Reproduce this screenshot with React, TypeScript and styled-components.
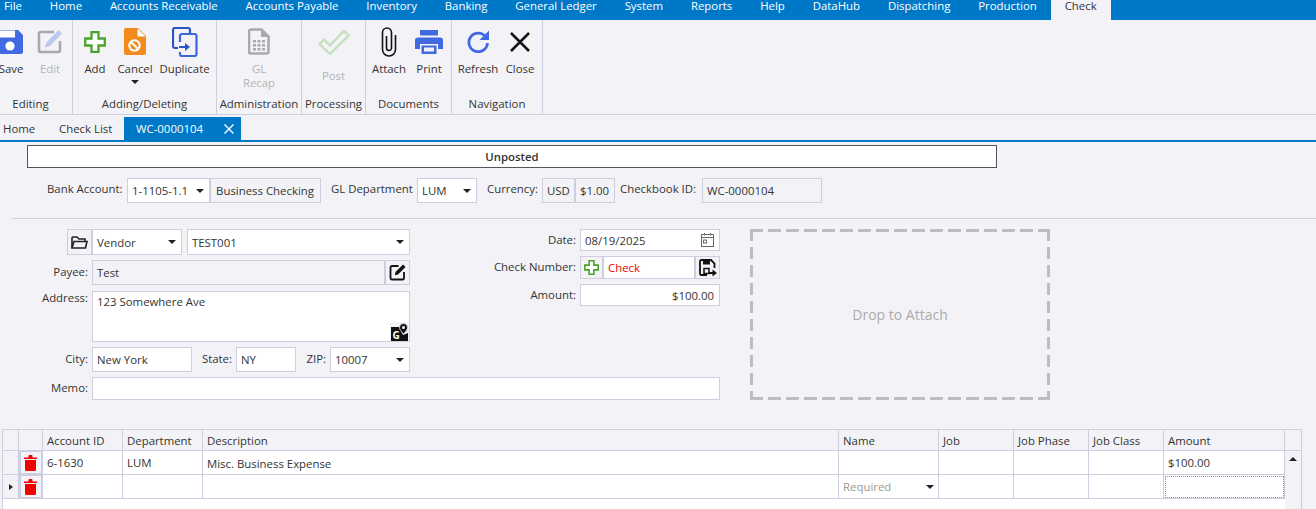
import React from "react";
import styled, { createGlobalStyle } from "styled-components";

const GlobalStyle = createGlobalStyle`
  html, body { margin: 0; padding: 0; background: #f3f3f7; }
  body { font-family: "Open Sans", "Noto Sans", "Liberation Sans", sans-serif; font-size: 11.4px; color: #333; }
  * { box-sizing: border-box; }
`;

const BORDER = "#cdcee0";
const PANEL = "#f3f3f7";
const BLUE = "#0078c8";
const ICON_BLUE = "#4169e1";
const DASH = "#bdbdbd";

const Page = styled.div`
  width: 1316px; height: 509px; overflow: hidden; background: ${PANEL};
  display: flex; flex-direction: column;
`;
const MenuBar = styled.div`
  height: 20px; flex: none; background: ${BLUE}; display: flex; margin-left: -10px;
`;
const MenuItem = styled.div<{ $active?: boolean }>`
  padding: 0 13.95px; line-height: 12px; height: 20px; white-space: nowrap;
  color: ${p => (p.$active ? "#333" : "#fff")};
  background: ${p => (p.$active ? PANEL : "transparent")};
`;
const Ribbon = styled.div`
  height: 95px; flex: none; display: flex; margin-left: -11px; border-bottom: 1px solid ${BORDER};
`;
const Group = styled.div<{ $w: number }>`
  width: ${p => p.$w}px; flex: none; display: flex; flex-direction: column; border-right: 1px solid ${BORDER};
`;
const GroupButtons = styled.div`
  height: 74px; display: flex;
`;
const GroupLabel = styled.div`
  height: 20px; text-align: center; line-height: 19px; white-space: nowrap;
`;
const RibbonButton = styled.div<{ $w: number; $disabled?: boolean }>`
  width: ${p => p.$w}px; flex: none; display: flex; flex-direction: column; align-items: center;
  color: ${p => (p.$disabled ? "#b4b4b8" : "#333")};
`;
const IconSlot = styled.div`
  height: 42px; width: 100%; flex: none; display: flex; align-items: center; justify-content: center; padding-top: 2px; padding-bottom: 1px;
`;
const ButtonLabel = styled.div<{ $drop?: number }>`
  text-align: center; line-height: 14px; white-space: nowrap; margin-top: ${p => p.$drop ?? 0}px;
`;
const DropArrow = styled.div`
  width: 0; height: 0; margin-top: 4px; border-left: 4px solid transparent; border-right: 4px solid transparent; border-top: 4px solid #222;
`;
const TabStrip = styled.div`
  height: 27px; flex: none; display: flex; align-items: flex-end; border-bottom: 2px solid ${BLUE};
`;
const Tab = styled.div<{ $active?: boolean; $w: number }>`
  width: ${p => p.$w}px; height: 23px; flex: none; display: flex; align-items: center; justify-content: space-between; white-space: nowrap;
  padding: 0 7px 0 ${p => (p.$active ? 12 : 3)}px;
  background: ${p => (p.$active ? BLUE : "transparent")};
  color: ${p => (p.$active ? "#fff" : "#333")};
`;
const StatusBar = styled.div`
  margin: 3px 0 0 27px; width: 970px; height: 23px; flex: none; background: #fff; border: 1px solid #555;
  display: flex; align-items: center; justify-content: center; font-weight: 600;
`;
const HeaderRow = styled.div`
  display: flex; height: 25px; flex: none; margin: 10px 0 0 47px; align-items: center;
`;
const InlineLabel = styled.div<{ $ml?: number; $w?: number }>`
  margin-left: ${p => p.$ml ?? 0}px; flex: none; white-space: nowrap;
  width: ${p => (p.$w ? `${p.$w}px` : "auto")};
  line-height: 14px; margin-top: -4px;
`;
const Field = styled.div<{ $w?: number; $ro?: boolean; $right?: boolean; $center?: boolean; $red?: boolean; $top?: boolean; $ml?: number }>`
  width: ${p => (p.$w ? `${p.$w}px` : "auto")};
  height: 100%;
  margin-left: ${p => p.$ml ?? 0}px;
  flex: none; position: relative; display: flex;
  align-items: ${p => (p.$top ? "flex-start" : "center")};
  justify-content: ${p => (p.$right ? "flex-end" : p.$center ? "center" : "space-between")};
  padding: ${p => (p.$top ? "2px 4px" : "0 5px 0 4px")};
  border: 1px solid ${BORDER};
  background: ${p => (p.$ro ? PANEL : "#fff")};
  color: ${p => (p.$red ? "#f00000" : "#333")};
  white-space: nowrap;
`;
const Caret = styled.span`
  width: 0; height: 0; flex: none; border-left: 4px solid transparent; border-right: 4px solid transparent; border-top: 4px solid #222;
`;
const Rule = styled.div`
  margin: 15px 0 0 12px; height: 1px; flex: none; background: ${BORDER};
`;
const FormArea = styled.div`
  display: flex; margin-top: 10px; flex: none; height: 171px;
`;
const FormBlock = styled.div`
  width: 720px; flex: none; display: flex; flex-direction: column; gap: 5px;
`;
const FormTop = styled.div`
  display: flex;
`;
const LeftCol = styled.div`
  width: 410px; flex: none; display: flex; flex-direction: column; gap: 5px;
`;
const RightCol = styled.div`
  width: 310px; flex: none; display: flex; flex-direction: column; gap: 5px;
`;
const FormRow = styled.div<{ $h: number; $ml?: number; $mb?: number; $top?: boolean }>`
  height: ${p => p.$h}px; display: flex; margin-left: ${p => p.$ml ?? 0}px; margin-bottom: ${p => p.$mb ?? 0}px;
  align-items: ${p => (p.$top ? "flex-start" : "center")};
`;
const RowLabel = styled.div<{ $w: number; $top?: boolean }>`
  width: ${p => p.$w}px; flex: none; text-align: right; margin-right: 4px; white-space: nowrap; line-height: 14px;
  margin-top: ${p => (p.$top ? 0 : -1)}px;
`;
const IconButton = styled.div<{ $w: number }>`
  width: ${p => p.$w}px; height: 100%; flex: none; display: flex; align-items: center; justify-content: center;
  border: 1px solid ${BORDER}; background: ${PANEL};
`;
const CornerIcon = styled.div`
  position: absolute; right: 0; bottom: 0; width: 19px; height: 19px; display: flex; align-items: center; justify-content: center;
  background: ${PANEL};
`;
const DropZone = styled.div`
  width: 300px; height: 171px; margin-left: 30px; flex: none;
  background:
    linear-gradient(90deg, ${DASH} 13px, transparent 13px) 0 0 / 18px 3px repeat-x,
    linear-gradient(90deg, ${DASH} 13px, transparent 13px) 0 100% / 18px 3px repeat-x,
    linear-gradient(180deg, ${DASH} 12px, transparent 12px) 0 0 / 3px 18px repeat-y,
    linear-gradient(180deg, ${DASH} 12px, transparent 12px) 100% 0 / 3px 18px repeat-y;
  display: flex; align-items: center; justify-content: center; color: #ababab; font-size: 14px;
`;
const Grid = styled.div`
  margin: 29px 0 0 2px; width: 1300px; flex: 1; display: flex; flex-direction: column; min-height: 0;
  border-top: 1px solid ${BORDER}; border-left: 1px solid ${BORDER};
`;
const COLS = "16px 24px 80px 80px 636px 100px 75px 75px 75px 121px";
const HeaderCells = styled.div`
  display: grid; grid-template-columns: ${COLS} 1fr; height: 21px; flex: none; border-bottom: 1px solid ${BORDER}; border-right: 1px solid ${BORDER};
`;
const GridBody = styled.div`
  flex: 1; display: flex; min-height: 0;
`;
const Rows = styled.div`
  width: 1282px; flex: none; background: #fff;
`;
const Row = styled.div`
  display: grid; grid-template-columns: ${COLS}; height: 24px;
`;
const HeadCell = styled.div`
  border-right: 1px solid ${BORDER}; padding-left: 4px; display: flex; align-items: center; white-space: nowrap;
  &:last-child { border-right: none; }
`;
const Cell = styled.div<{ $drop?: number; $focus?: boolean }>`
  border-right: 1px solid ${BORDER}; border-bottom: 1px solid ${BORDER}; padding: ${p => p.$drop ?? 0}px 4px 0; display: flex; align-items: center; justify-content: space-between; white-space: nowrap; min-width: 0;
  ${p => p.$focus && "outline: 1px dotted #5aa2d8; outline-offset: -2px;"}
`;
const RowHead = styled.div`
  background: ${PANEL}; border-right: 1px solid ${BORDER}; border-bottom: 1px solid ${BORDER}; display: flex; align-items: center; justify-content: center;
`;
const TrashCell = styled.div`
  background: ${PANEL}; border: 2px solid ${BORDER}; border-top-width: 1px; padding-right: 2px; display: flex; align-items: center; justify-content: center;
`;
const Pointer = styled.span`
  width: 0; height: 0; border-top: 3.5px solid transparent; border-bottom: 3.5px solid transparent; border-left: 4px solid #222;
`;
const Hint = styled.span`
  color: #999;
`;
const ScrollBar = styled.div`
  flex: 1; border-right: 1px solid ${BORDER}; display: flex; justify-content: center; padding-top: 6px;
`;
const UpArrow = styled.span`
  width: 0; height: 0; border-left: 4px solid transparent; border-right: 4px solid transparent; border-bottom: 4px solid #222;
`;

const SaveIcon = () => (
  <svg width="24" height="24" viewBox="0 0 24 24"><path d="M2 0h17l5 5v17a2 2 0 0 1-2 2H2a2 2 0 0 1-2-2V2a2 2 0 0 1 2-2z" fill={ICON_BLUE} /><rect x="0" y="0.500" width="16" height="7" fill="#fff" /><circle cx="11" cy="16" r="4.600" fill="#fff" /></svg>
);
const EditIcon = () => (
  <svg width="26" height="25" viewBox="0 0 26 25"><path d="M17 3H3.500A1.500 1.500 0 0 0 2 4.500V21.500A1.500 1.500 0 0 0 3.500 23h18A1.500 1.500 0 0 0 23 21.500V12" fill="none" stroke="#a9a9ad" strokeWidth="2.600" /><path d="M21.500 1l3.500 3.500L13 17l-5 1.500L9.500 13.500z" fill="#b9c8ee" /></svg>
);
const PlusIcon = ({ s = 22 }: { s?: number }) => (
  <svg width={s} height={s} viewBox="0 0 22 22"><path d="M7.500 1.200h7v6.300h6.300v7h-6.300v6.300h-7v-6.300H1.200v-7h6.300z" fill="#fff" stroke="#49a32c" strokeWidth="2.300" /></svg>
);
const CancelIcon = () => (
  <svg width="22" height="27" viewBox="0 0 22 27"><path d="M2 0h12l8 8v17a2 2 0 0 1-2 2H2a2 2 0 0 1-2-2V2a2 2 0 0 1 2-2z" fill="#f28b1e" /><path d="M13.500 0.500l8 8h-8z" fill="#fff" /><circle cx="10.500" cy="17.500" r="5.200" fill="none" stroke="#fff" strokeWidth="2.100" /><path d="M7 14l7 7" stroke="#fff" strokeWidth="2.100" /></svg>
);
const DuplicateIcon = () => (
  <svg width="26" height="30" viewBox="0 0 26 30"><path d="M6 21H3a2 2 0 0 1-2-2V3a2 2 0 0 1 2-2h13a2 2 0 0 1 2 2v3" fill="none" stroke="#2c55c4" strokeWidth="2.200" /><path d="M8 15V9a2 2 0 0 1 2-2h12.500a2 2 0 0 1 2 2v18a2 2 0 0 1-2 2H10a2 2 0 0 1-2-2v-2" fill="none" stroke="#3d66dd" strokeWidth="2.200" /><path d="M7 20h7" stroke="#2c55c4" strokeWidth="2" /><path d="M13 16l5 4-5 4z" fill="#2c55c4" /></svg>
);
const RecapIcon = () => (
  <svg width="22" height="27" viewBox="0 0 22 27"><path d="M3 1.500h10.500l7 7V23.500a2 2 0 0 1-2 2H3a2 2 0 0 1-2-2V3.500a2 2 0 0 1 2-2z" fill="#f3f3f7" stroke="#aaaaae" strokeWidth="2.600" /><path d="M13 1l8 8h-8z" fill="#aaaaae" /><g fill="#aaaaae"><rect x="5" y="12" width="3" height="2.500" /><rect x="9.500" y="12" width="3" height="2.500" /><rect x="14" y="12" width="3" height="2.500" /><rect x="5" y="16" width="3" height="2.500" /><rect x="9.500" y="16" width="3" height="2.500" /><rect x="14" y="16" width="3" height="2.500" /><rect x="5" y="20" width="3" height="2.500" /><rect x="9.500" y="20" width="3" height="2.500" /><rect x="14" y="20" width="3" height="2.500" /></g></svg>
);
const PostIcon = () => (
  <svg width="32" height="26" viewBox="0 0 32 26"><path d="M1.500 15l4.500-4.500 6 6L26 2l4.500 4.500L12 25z" fill="#f3f3f7" stroke="#c4e0bc" strokeWidth="2.400" /></svg>
);
const ClipIcon = () => (
  <svg width="16" height="30" viewBox="0 0 16 30"><path d="M5.500 9V21a2.500 2.500 0 0 0 5 0V5.500a4.500 4.500 0 0 0-9 0V22.500a6.500 6.500 0 0 0 13 0V8" fill="none" stroke="#111" strokeWidth="1.600" /></svg>
);
const PrintIcon = () => (
  <svg width="28" height="24" viewBox="0 0 28 24" fill={ICON_BLUE}><rect x="5" y="0" width="18" height="5.500" /><path d="M3 7.500h22a3 3 0 0 1 3 3V19h-5v-5H5v5H0v-8.500a3 3 0 0 1 3-3z" /><path d="M6.500 15.500h15V24h-15z M9 17.500v4h10v-4z" fillRule="evenodd" /></svg>
);
const RefreshIcon = () => (
  <svg width="23" height="23" viewBox="0 0 23 23"><path d="M18.800 7A9.300 9.300 0 1 0 20.500 13" fill="none" stroke={ICON_BLUE} strokeWidth="2.800" /><path d="M22 0.500V10H12.500z" fill={ICON_BLUE} /></svg>
);
const CloseIcon = () => (
  <svg width="20" height="20" viewBox="0 0 20 20"><path d="M1 1l18 18M19 1L1 19" stroke="#111" strokeWidth="2.500" /></svg>
);
const TabClose = () => (
  <svg width="10" height="10" viewBox="0 0 10 10"><path d="M0.500 0.500l9 9M9.500 0.500l-9 9" stroke="#fff" strokeWidth="1.400" /></svg>
);
const FolderIcon = () => (
  <svg width="17" height="13" viewBox="0 0 17 13"><path d="M1 12V2a1 1 0 0 1 1-1h4l2 2h6v2" fill="none" stroke="#222" strokeWidth="1.600" /><path d="M1 12h13.500l1.500-6.500H3z" fill="none" stroke="#222" strokeWidth="1.600" /></svg>
);
const PenSquareIcon = () => (
  <svg width="17" height="17" viewBox="0 0 17 17"><path d="M9.500 2H3a1.500 1.500 0 0 0-1.500 1.500V14A1.500 1.500 0 0 0 3 15.500h10.500A1.500 1.500 0 0 0 15 14V8" fill="none" stroke="#111" strokeWidth="1.800" /><path d="M14 0.500L16.500 3 9 10.500 5.800 11.300 6.500 8z" fill="#111" /></svg>
);
const MapIcon = () => (
  <svg width="17" height="18" viewBox="0 0 17 18"><path d="M0 4h8l4 8 5-2v8H0z" fill="#111" /><path d="M12.500 0.500a4 4 0 0 1 4 4c0 2.500-4 6.500-4 6.500s-4-4-4-6.500a4 4 0 0 1 4-4z" fill="#111" stroke="#f3f3f7" strokeWidth="0.700" /><circle cx="12.500" cy="4.500" r="1.500" fill="#fff" /><text x="1.500" y="15.500" fontSize="10" fontWeight="700" fill="#fff" fontFamily="Open Sans, sans-serif">G</text></svg>
);
const CalendarIcon = () => (
  <svg width="13" height="14" viewBox="0 0 13 14"><rect x="0.500" y="1.500" width="12" height="12" fill="none" stroke="#666" /><path d="M0.500 4.500h12M3.500 0v2.500M9.500 0v2.500" stroke="#666" /><rect x="2.500" y="7" width="3" height="3" fill="none" stroke="#666" /></svg>
);
const SaveArrowIcon = () => (
  <svg width="18" height="18" viewBox="0 0 18 18"><path d="M8 16H2.500A1.500 1.500 0 0 1 1 14.500V2.500A1.500 1.500 0 0 1 2.500 1H12l3.500 3.500V9" fill="none" stroke="#111" strokeWidth="1.800" /><path d="M4 1.500h7v4H4z" fill="#111" /><path d="M5 9.500h5v5H5z" fill="none" stroke="#111" strokeWidth="1.500" /><path d="M10 14h4.500" stroke="#111" strokeWidth="2" /><path d="M13.500 10.500L18 14l-4.500 3.500z" fill="#111" /></svg>
);
const TrashIcon = () => (
  <svg width="13" height="16" viewBox="0 0 13 16" fill="#f00000"><path d="M0 2.500h4.500V1a1 1 0 0 1 1-1h2a1 1 0 0 1 1 1v1.500H13V4H0z" /><path d="M1 5h11v9.500a1.500 1.500 0 0 1-1.500 1.500h-8A1.500 1.500 0 0 1 1 14.500z" /></svg>
);

const menus = ["File", "Home", "Accounts Receivable", "Accounts Payable", "Inventory", "Banking", "General Ledger", "System", "Reports", "Help", "DataHub", "Dispatching", "Production"];
const columns = ["", "", "Account ID", "Department", "Description", "Name", "Job", "Job Phase", "Job Class", "Amount", ""];

export default function App() {
  return (
    <Page>
      <GlobalStyle />
      <MenuBar>
        {menus.map(m => <MenuItem key={m}>{m}</MenuItem>)}
        <MenuItem $active>Check</MenuItem>
      </MenuBar>
      <Ribbon>
        <Group $w={84}>
          <GroupButtons>
            <RibbonButton $w={44}><IconSlot><SaveIcon /></IconSlot><ButtonLabel>Save</ButtonLabel></RibbonButton>
            <RibbonButton $w={34} $disabled><IconSlot><EditIcon /></IconSlot><ButtonLabel>Edit</ButtonLabel></RibbonButton>
          </GroupButtons>
          <GroupLabel>Editing</GroupLabel>
        </Group>
        <Group $w={144}>
          <GroupButtons>
            <RibbonButton $w={44}><IconSlot><PlusIcon /></IconSlot><ButtonLabel>Add</ButtonLabel></RibbonButton>
            <RibbonButton $w={36}><IconSlot><CancelIcon /></IconSlot><ButtonLabel>Cancel</ButtonLabel><DropArrow /></RibbonButton>
            <RibbonButton $w={63}><IconSlot><DuplicateIcon /></IconSlot><ButtonLabel>Duplicate</ButtonLabel></RibbonButton>
          </GroupButtons>
          <GroupLabel>Adding/Deleting</GroupLabel>
        </Group>
        <Group $w={85}>
          <GroupButtons>
            <RibbonButton $w={84} $disabled><IconSlot><RecapIcon /></IconSlot><ButtonLabel>GL<br />Recap</ButtonLabel></RibbonButton>
          </GroupButtons>
          <GroupLabel>Administration</GroupLabel>
        </Group>
        <Group $w={64}>
          <GroupButtons>
            <RibbonButton $w={63} $disabled><IconSlot><PostIcon /></IconSlot><ButtonLabel $drop={7}>Post</ButtonLabel></RibbonButton>
          </GroupButtons>
          <GroupLabel>Processing</GroupLabel>
        </Group>
        <Group $w={86}>
          <GroupButtons>
            <RibbonButton $w={46}><IconSlot><ClipIcon /></IconSlot><ButtonLabel>Attach</ButtonLabel></RibbonButton>
            <RibbonButton $w={34}><IconSlot><PrintIcon /></IconSlot><ButtonLabel>Print</ButtonLabel></RibbonButton>
          </GroupButtons>
          <GroupLabel>Documents</GroupLabel>
        </Group>
        <Group $w={91}>
          <GroupButtons>
            <RibbonButton $w={52}><IconSlot><RefreshIcon /></IconSlot><ButtonLabel>Refresh</ButtonLabel></RibbonButton>
            <RibbonButton $w={32}><IconSlot><CloseIcon /></IconSlot><ButtonLabel>Close</ButtonLabel></RibbonButton>
          </GroupButtons>
          <GroupLabel>Navigation</GroupLabel>
        </Group>
      </Ribbon>
      <TabStrip>
        <Tab $w={56}>Home</Tab>
        <Tab $w={68}>Check List</Tab>
        <Tab $w={117} $active>WC-0000104<TabClose /></Tab>
      </TabStrip>
      <StatusBar>Unposted</StatusBar>
      <HeaderRow>
        <InlineLabel $w={80}>Bank Account:</InlineLabel>
        <Field $w={83}>1-1105-1.1<Caret /></Field>
        <Field $w={111} $ro $center>Business Checking</Field>
        <InlineLabel $ml={10} $w={86}>GL Department</InlineLabel>
        <Field $w={60}>LUM<Caret /></Field>
        <InlineLabel $ml={10} $w={55}>Currency:</InlineLabel>
        <Field $w={33} $ro>USD</Field>
        <Field $w={40} $ro>$1.00</Field>
        <InlineLabel $ml={5} $w={82}>Checkbook ID:</InlineLabel>
        <Field $w={120} $ro>WC-0000104</Field>
      </HeaderRow>
      <Rule />
      <FormArea>
        <FormBlock>
          <FormTop>
            <LeftCol>
              <FormRow $h={26} $ml={67}>
                <IconButton $w={25}><FolderIcon /></IconButton>
                <Field $w={90}>Vendor<Caret /></Field>
                <Field $w={223} $ml={5}>TEST001<Caret /></Field>
              </FormRow>
              <FormRow $h={25} $mb={1}>
                <RowLabel $w={88}>Payee:</RowLabel>
                <Field $w={293} $ro>Test</Field>
                <IconButton $w={25}><PenSquareIcon /></IconButton>
              </FormRow>
              <FormRow $h={51} $top>
                <RowLabel $w={88} $top>Address:</RowLabel>
                <Field $w={318} $top>123 Somewhere Ave<CornerIcon><MapIcon /></CornerIcon></Field>
              </FormRow>
              <FormRow $h={25}>
                <RowLabel $w={88}>City:</RowLabel>
                <Field $w={100}>New York</Field>
                <RowLabel $w={40}>State:</RowLabel>
                <Field $w={60}>NY</Field>
                <RowLabel $w={30}>ZIP:</RowLabel>
                <Field $w={80}>10007<Caret /></Field>
              </FormRow>
            </LeftCol>
            <RightCol>
              <FormRow $h={22}>
                <RowLabel $w={166}>Date:</RowLabel>
                <Field $w={140}>08/19/2025<CalendarIcon /></Field>
              </FormRow>
              <FormRow $h={23}>
                <RowLabel $w={166}>Check Number:</RowLabel>
                <IconButton $w={23}><PlusIcon s={15} /></IconButton>
                <Field $w={92} $red>Check</Field>
                <IconButton $w={25}><SaveArrowIcon /></IconButton>
              </FormRow>
              <FormRow $h={22}>
                <RowLabel $w={166}>Amount:</RowLabel>
                <Field $w={140} $right>$100.00</Field>
              </FormRow>
            </RightCol>
          </FormTop>
          <FormRow $h={23}>
            <RowLabel $w={88}>Memo:</RowLabel>
            <Field $w={628} />
          </FormRow>
        </FormBlock>
        <DropZone>Drop to Attach</DropZone>
      </FormArea>
      <Grid>
        <HeaderCells>
          {columns.map((c, i) => <HeadCell key={i}>{c}</HeadCell>)}
        </HeaderCells>
        <GridBody>
          <Rows>
            <Row>
              <RowHead />
              <TrashCell><TrashIcon /></TrashCell>
              <Cell>6-1630</Cell>
              <Cell>LUM</Cell>
              <Cell $drop={2}>Misc. Business Expense</Cell>
              <Cell />
              <Cell />
              <Cell />
              <Cell />
              <Cell>$100.00</Cell>
            </Row>
            <Row>
              <RowHead><Pointer /></RowHead>
              <TrashCell><TrashIcon /></TrashCell>
              <Cell />
              <Cell />
              <Cell />
              <Cell><Hint>Required</Hint><Caret /></Cell>
              <Cell />
              <Cell />
              <Cell />
              <Cell $focus />
            </Row>
          </Rows>
          <ScrollBar><UpArrow /></ScrollBar>
        </GridBody>
      </Grid>
    </Page>
  );
}
